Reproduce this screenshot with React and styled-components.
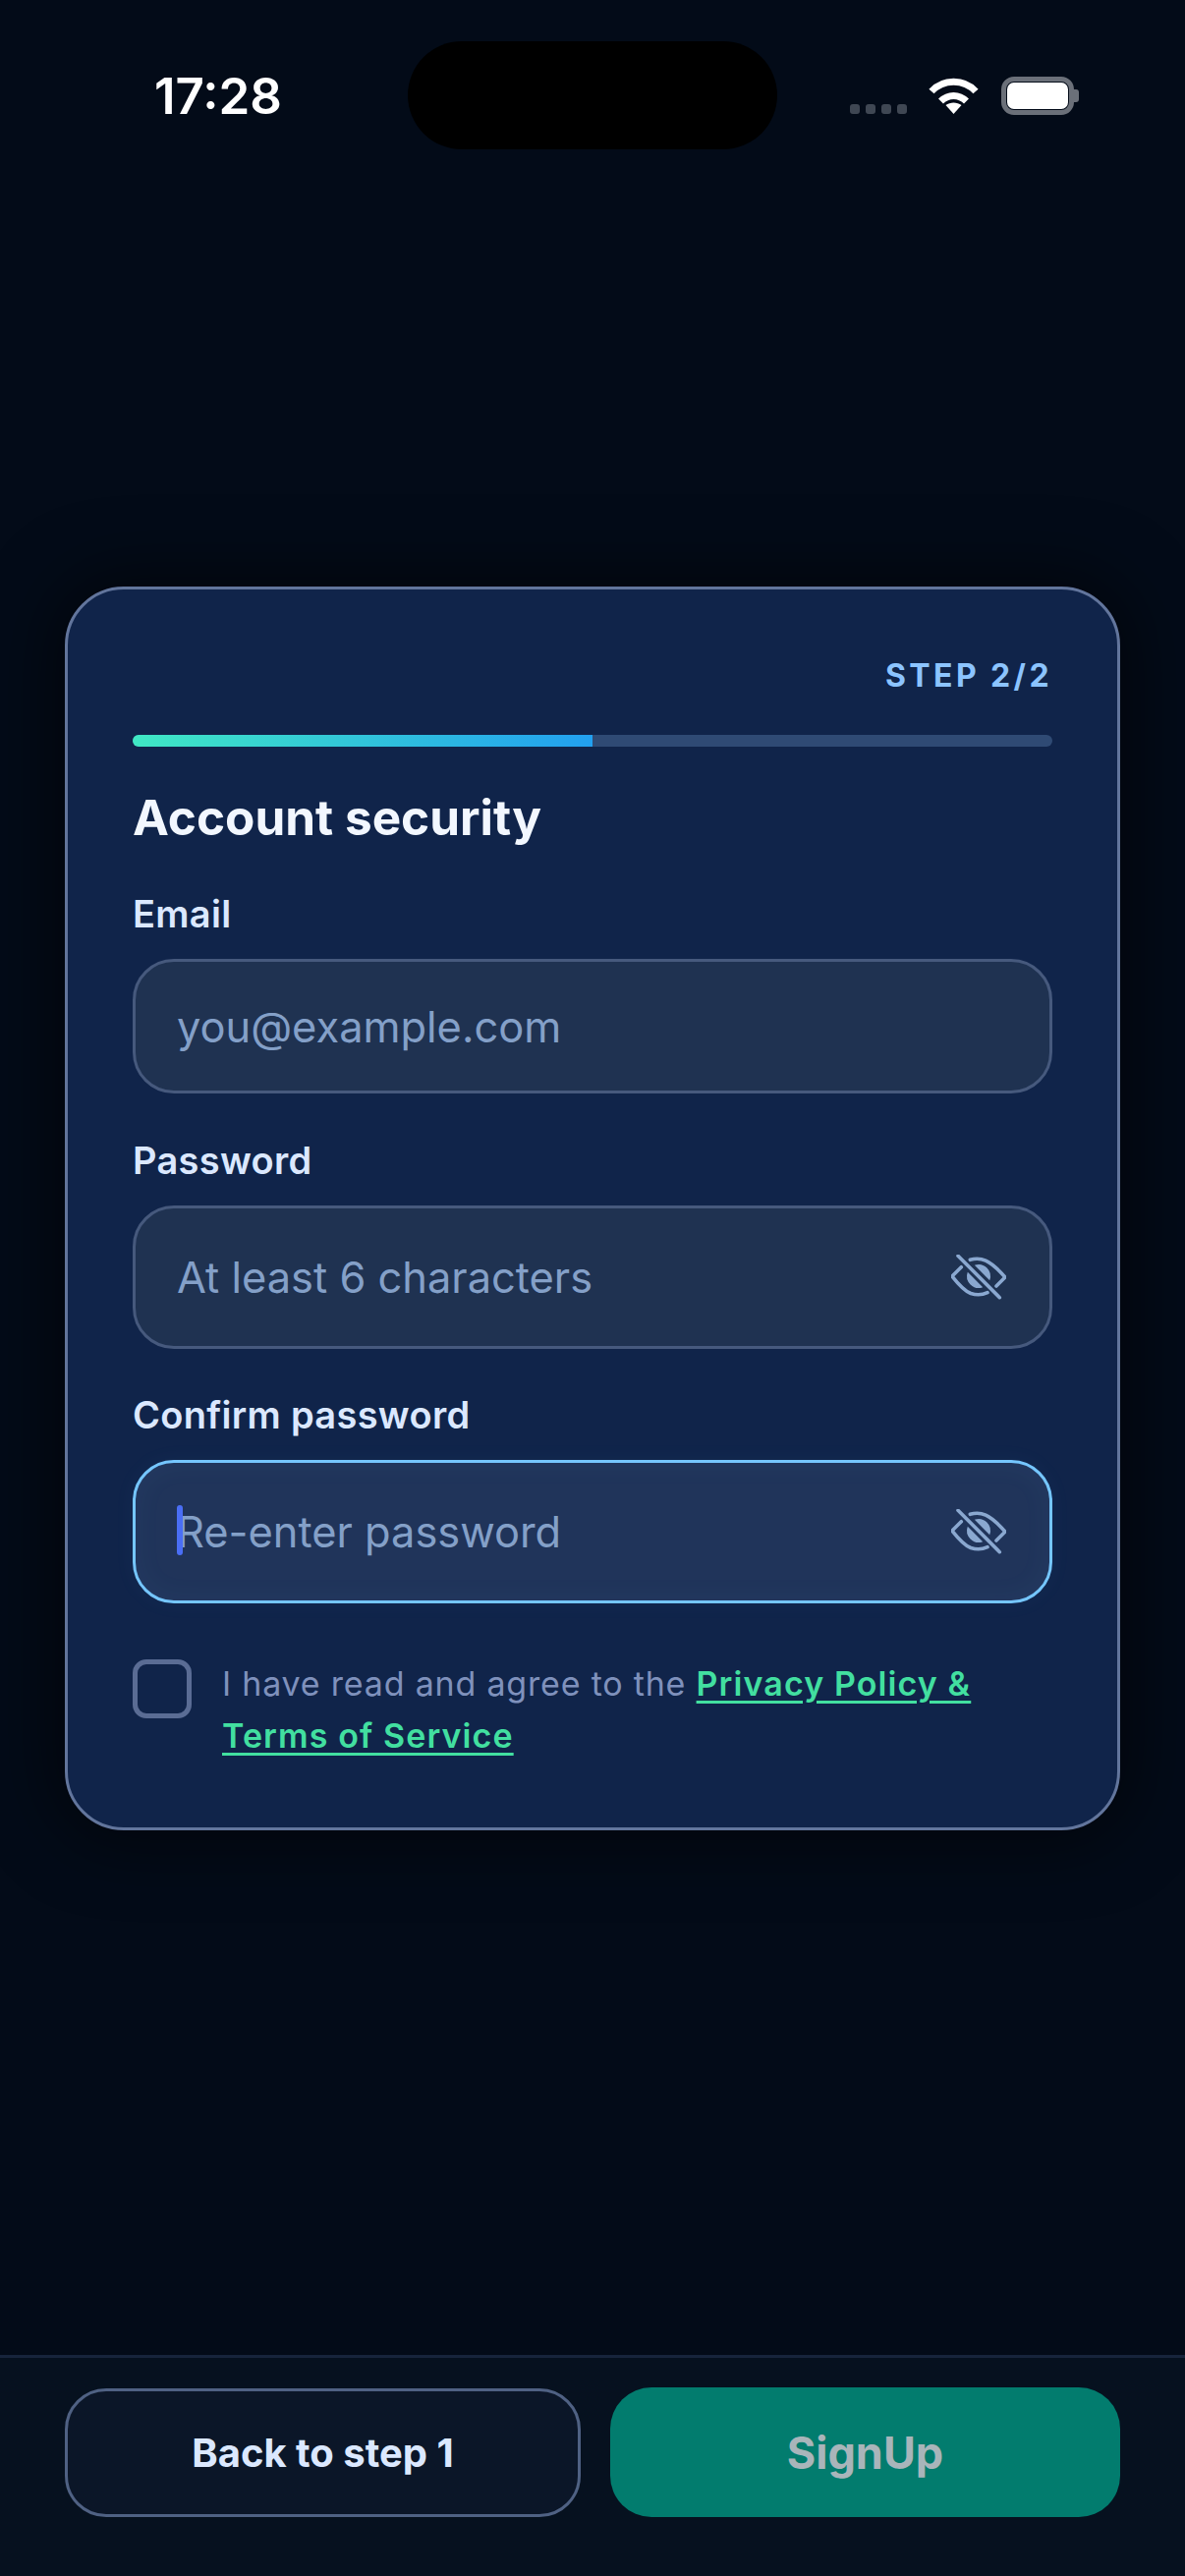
import React from "react";
import styled, { createGlobalStyle } from "styled-components";

const Global = createGlobalStyle`
  html, body { margin: 0; padding: 0; background: #030b18; }
  * { box-sizing: border-box; }
  body { font-family: Inter, "Noto Sans", "Liberation Sans", sans-serif; }
`;

const Page = styled.div`
  width: 1206px;
  height: 2622px;
  display: flex;
  flex-direction: column;
  overflow: hidden;
  background: #030b18;
`;

const StatusBar = styled.header`
  height: 180px;
  flex: none;
  display: grid;
  grid-template-columns: 415px 376px 1fr;
  padding-top: 42px;
  align-items: start;
`;

const Time = styled.div`
  padding: 28px 0 0 157px;
  font-size: 51px;
  line-height: 56px;
  font-weight: 600;
  color: #fff;
`;

const Island = styled.div`
  height: 110px;
  border-radius: 55px;
  background: #000;
`;

const StatusIcons = styled.div`
  display: flex;
  align-items: flex-end;
  padding: 36px 0 0 74px;
  height: 75px;
`;

const Signal = styled.div`
  display: flex;
  gap: 6px;
  margin-right: 22px;
  margin-bottom: 1px;
`;

const SignalDot = styled.span`
  width: 10px;
  height: 10px;
  border-radius: 3px;
  background: #3f4753;
`;

const WifiIcon = styled.svg`
  width: 51px;
  height: 37px;
  margin-right: 23px;
  margin-bottom: 1px;
  display: block;
`;

const Battery = styled.div`
  display: flex;
  align-items: center;
`;

const BatteryBody = styled.div`
  width: 74px;
  height: 39px;
  border: 5px solid #6b7079;
  border-radius: 13px;
  padding: 1px;
  display: flex;
`;

const BatteryFill = styled.div`
  flex: 1;
  background: #fff;
  border-radius: 7px;
`;

const BatteryCap = styled.div`
  width: 5px;
  height: 13px;
  background: #6b7079;
  border-radius: 0 3px 3px 0;
`;

const Main = styled.main`
  flex: 1;
  padding: 417px 66px 0;
`;

const Card = styled.section`
  height: 1266px;
  padding: 68px 66px 0;
  border: 3px solid #62759c;
  border-radius: 60px;
  background: #10244a;
  box-shadow: 0 0 70px 10px rgba(0, 0, 0, 0.55);
`;

const StepLabel = styled.div`
  text-align: right;
  font-size: 32px;
  line-height: 40px;
  font-weight: 700;
  letter-spacing: 3.4px;
  color: #8cc4ff;
`;

const Track = styled.div`
  height: 12px;
  margin-top: 40px;
  border-radius: 6px;
  background: #2f4a74;
  overflow: hidden;
`;

const TrackFill = styled.div`
  height: 100%;
  background: linear-gradient(90deg, #40e8c4, #22a0f0);
`;

const Title = styled.h1`
  margin: 42px 0 0;
  font-size: 49.5px;
  line-height: 60px;
  font-weight: 700;
  color: #f2f7ff;
`;

const Label = styled.label`
  display: block;
  margin-top: ${(p) => p.$top}px;
  font-size: 38px;
  line-height: 44px;
  font-weight: 600;
  letter-spacing: 0.3px;
  color: #dbe8ff;
`;

const Field = styled.div`
  position: relative;
  height: ${(p) => p.$height}px;
  margin-top: 24px;
  padding: 0 44px 0 42px;
  display: flex;
  align-items: center;
  border: 3px solid ${(p) => (p.$focused ? "#75c6ff" : "#46597d")};
  border-radius: 42px;
  background: ${(p) => (p.$focused ? "#20345a" : "#1f3251")};
  box-shadow: ${(p) => (p.$focused ? "inset 0 0 30px rgba(117, 198, 255, 0.05), 0 0 24px rgba(117, 198, 255, 0.04)" : "none")};
`;

const Input = styled.input`
  flex: 1;
  min-width: 0;
  padding: 0;
  border: 0;
  outline: 0;
  background: transparent;
  font-family: inherit;
  font-size: 43.4px;
  line-height: 54px;
  color: #fff;
  &::placeholder {
    color: #84a0c8;
    opacity: 1;
  }
`;

const Caret = styled.span`
  position: absolute;
  left: 42px;
  top: 43px;
  width: 6px;
  height: 51px;
  border-radius: 3px;
  background: #4a6ef5;
`;

const EyeIcon = styled.svg`
  flex: none;
  width: 56px;
  height: 46px;
  display: block;
`;

const Agree = styled.div`
  display: flex;
  align-items: flex-start;
  gap: 31px;
  margin-top: 55px;
`;

const Checkbox = styled.span`
  flex: none;
  width: 60px;
  height: 60px;
  margin-top: 2px;
  border: 5px solid #5a6c94;
  border-radius: 14px;
`;

const AgreeText = styled.p`
  margin: 0;
  font-size: 34px;
  line-height: 53px;
  letter-spacing: 0.8px;
  color: #7f91bc;
`;

const Link = styled.a`
  color: #42dfa0;
  font-weight: 600;
  letter-spacing: 1.1px;
  text-decoration: underline;
  text-underline-offset: 5px;
  text-decoration-thickness: 3px;
`;

const Footer = styled.footer`
  height: 225px;
  flex: none;
  display: grid;
  grid-template-columns: 525px 519px;
  justify-content: space-between;
  align-items: start;
  padding: 30px 66px 0;
  border-top: 3px solid #17243b;
  background: #06111f;
`;

const BackButton = styled.button`
  height: 131px;
  margin-top: 1px;
  border: 3px solid #4f6183;
  border-radius: 42px;
  background: #0b1628;
  font-family: inherit;
  font-size: 40px;
  font-weight: 700;
  color: #dbe8ff;
`;

const SignUpButton = styled.button`
  height: 132px;
  border: 0;
  border-radius: 42px;
  background: #027c6e;
  font-family: inherit;
  font-size: 45px;
  font-weight: 700;
  color: #a9b5ba;
`;

const Eye = () => (
  <EyeIcon viewBox="0 0 56 46" fill="none" stroke="#8aa8d0" strokeWidth="3.6" strokeLinecap="round" strokeLinejoin="round">
    <path d="M19.3 5.3C30 2 39 5 55 23L46 32" />
    <path d="M10.3 12.7L1 22C8 31 14 37 20 39.5C26 41.5 32 41 37 38.7" />
    <path d="M7 1.3L49.3 43.7" />
    <path d="M23.8 10.8A12 12 0 0 1 39.2 26.2Z M32.2 33.2A12 12 0 0 1 16.8 17.8Z" fill="#8aa8d0" stroke="none" />
  </EyeIcon>
);

const Wifi = () => (
  <WifiIcon viewBox="0 0 51 37" fill="none" stroke="#fff" strokeWidth="7">
    <path d="M3 14C15 1 36 1 48 14" />
    <path d="M12.5 24C20 16.5 31 16.5 38.5 24" />
    <path d="M25.5 37L17.5 28C22 24.5 29 24.5 33.5 28Z" fill="#fff" stroke="none" />
  </WifiIcon>
);

export default function App() {
  return (
    <Page>
      <Global />
      <StatusBar>
        <Time>17:28</Time>
        <Island />
        <StatusIcons>
          <Signal>
            <SignalDot />
            <SignalDot />
            <SignalDot />
            <SignalDot />
          </Signal>
          <Wifi />
          <Battery>
            <BatteryBody>
              <BatteryFill />
            </BatteryBody>
            <BatteryCap />
          </Battery>
        </StatusIcons>
      </StatusBar>
      <Main>
        <Card>
          <StepLabel>STEP 2/2</StepLabel>
          <Track>
            <TrackFill style={{ width: "50%" }} />
          </Track>
          <Title>Account security</Title>
          <Label $top={46}>Email</Label>
          <Field $height={137}>
            <Input placeholder="you@example.com" readOnly />
          </Field>
          <Label $top={46}>Password</Label>
          <Field $height={146}>
            <Input placeholder="At least 6 characters" readOnly />
            <Eye />
          </Field>
          <Label $top={45}>Confirm password</Label>
          <Field $height={146} $focused>
            <Caret />
            <Input placeholder="Re-enter password" readOnly />
            <Eye />
          </Field>
          <Agree>
            <Checkbox />
            <AgreeText>
              I have read and agree to the <Link>Privacy Policy &amp; Terms of Service</Link>
            </AgreeText>
          </Agree>
        </Card>
      </Main>
      <Footer>
        <BackButton>Back to step 1</BackButton>
        <SignUpButton>SignUp</SignUpButton>
      </Footer>
    </Page>
  );
}
